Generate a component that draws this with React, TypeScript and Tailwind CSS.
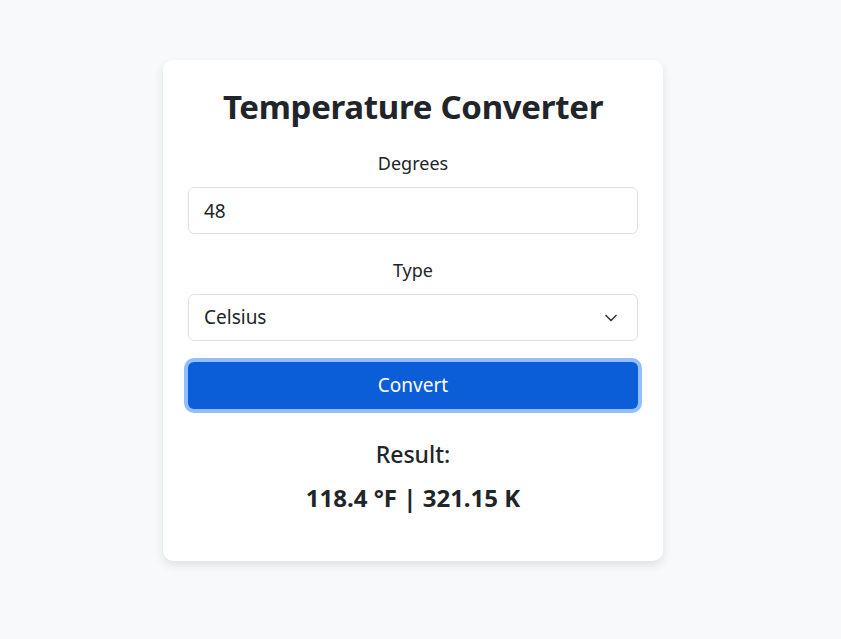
import { ChevronDown } from 'lucide-react';

export default function App() {
  return (
    <div
      className="min-h-[639px] bg-[#f8f9fa] pt-[60px]"
      style={{ fontFamily: '"Noto Sans", "Open Sans", sans-serif' }}
    >
      <div className="ml-[163px] w-[500px] rounded-[10px] bg-white px-[25px] pt-[28px] pb-[47px] shadow-[0_4px_10px_rgba(0,0,0,0.1)] text-[#212529]">
        <h1 className="text-center text-[33px] font-bold leading-[38px] tracking-[-0.3px]">
          Temperature Converter
        </h1>

        <div className="mt-[24px]">
          <label className="block text-center text-[18px] leading-[26px]">Degrees</label>
          <input
            readOnly
            value="48"
            className="mt-[11px] block h-[47px] w-full rounded-[6px] border border-[#dee2e6] px-[15px] text-[19px] text-[#212529] outline-none"
          />
        </div>

        <div className="mt-[23px]">
          <label className="block text-center text-[18px] leading-[26px]">Type</label>
          <div className="relative mt-[11px] flex h-[47px] w-full items-center rounded-[6px] border border-[#dee2e6] px-[15px] text-[19px]">
            <span>Celsius</span>
            <ChevronDown className="absolute right-[16px] h-[20px] w-[20px] text-[#343a40]" strokeWidth={2} />
          </div>
        </div>

        <button className="mt-[21px] block h-[47px] w-full rounded-[6px] bg-[#0b5ed7] text-[19px] text-white shadow-[0_0_0_4px_rgba(13,110,253,0.45)]">
          Convert
        </button>

        <div className="mt-[30px] text-center">
          <h3 className="text-[23px] font-medium leading-[30px]">Result:</h3>
          <p className="mt-[13px] text-[24px] font-bold leading-[32px]">118.4 °F | 321.15 K</p>
        </div>
      </div>
    </div>
  );
}
